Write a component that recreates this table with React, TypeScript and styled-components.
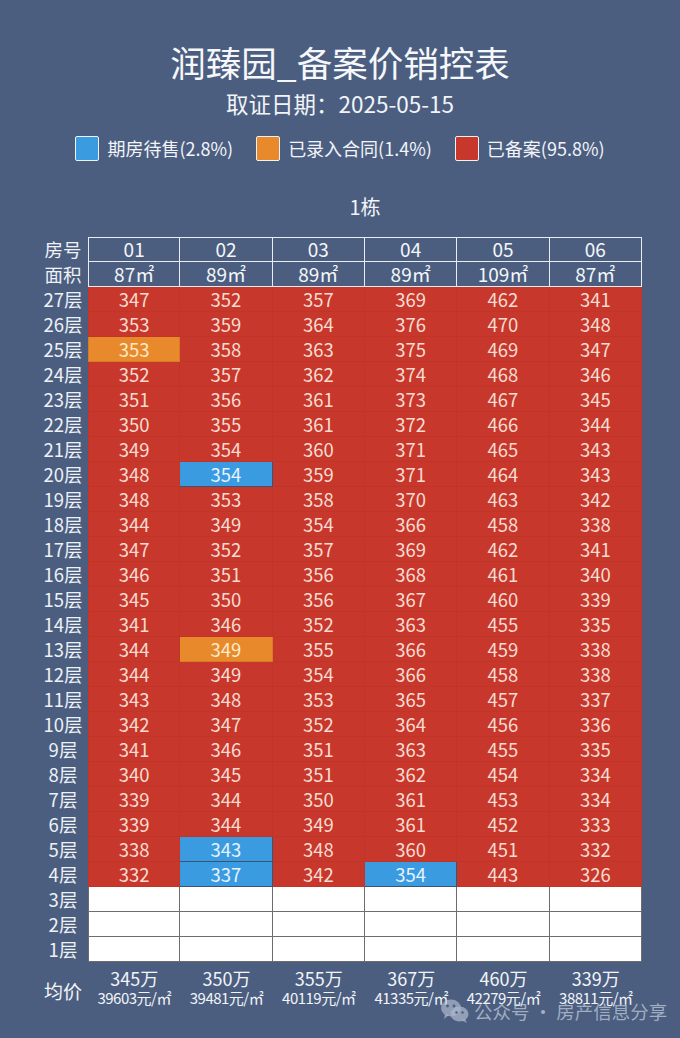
import React from "react";
import styled, { createGlobalStyle } from "styled-components";

const GlobalStyle = createGlobalStyle`
  html, body {
    margin: 0;
    padding: 0;
    background: #4b5e80;
  }
  body {
    font-family: "Noto Sans CJK SC", "Noto Sans", sans-serif;
    color: #f2f4f8;
  }
`;

type Status = "r" | "b" | "o" | "w";

const palette: Record<Status, { bg: string; fg: string; line: string }> = {
  r: { bg: "#c8372b", fg: "#f7dcd2", line: "#c13428" },
  b: { bg: "#3a9be0", fg: "#e6f3ff", line: "#3b5470" },
  o: { bg: "#e8892b", fg: "#fdebc9", line: "#d77c24" },
  w: { bg: "#ffffff", fg: "#333", line: "#6d6d6d" },
};

const units = [
  { no: "01", area: "87㎡", total: "345万", unit: "39603元/㎡" },
  { no: "02", area: "89㎡", total: "350万", unit: "39481元/㎡" },
  { no: "03", area: "89㎡", total: "355万", unit: "40119元/㎡" },
  { no: "04", area: "89㎡", total: "367万", unit: "41335元/㎡" },
  { no: "05", area: "109㎡", total: "460万", unit: "42279元/㎡" },
  { no: "06", area: "87㎡", total: "339万", unit: "38811元/㎡" },
];

// floor -> prices, "*" = 期房待售, "^" = 已录入合同
const rows: [number, string][] = [
  [27, "347 352 357 369 462 341"],
  [26, "353 359 364 376 470 348"],
  [25, "353^ 358 363 375 469 347"],
  [24, "352 357 362 374 468 346"],
  [23, "351 356 361 373 467 345"],
  [22, "350 355 361 372 466 344"],
  [21, "349 354 360 371 465 343"],
  [20, "348 354* 359 371 464 343"],
  [19, "348 353 358 370 463 342"],
  [18, "344 349 354 366 458 338"],
  [17, "347 352 357 369 462 341"],
  [16, "346 351 356 368 461 340"],
  [15, "345 350 356 367 460 339"],
  [14, "341 346 352 363 455 335"],
  [13, "344 349^ 355 366 459 338"],
  [12, "344 349 354 366 458 338"],
  [11, "343 348 353 365 457 337"],
  [10, "342 347 352 364 456 336"],
  [9, "341 346 351 363 455 335"],
  [8, "340 345 351 362 454 334"],
  [7, "339 344 350 361 453 334"],
  [6, "339 344 349 361 452 333"],
  [5, "338 343* 348 360 451 332"],
  [4, "332 337* 342 354* 443 326"],
  [3, ""],
  [2, ""],
  [1, ""],
];

const parse = (s: string): { v: string; st: Status }[] => {
  if (!s) return Array.from({ length: 6 }, () => ({ v: "", st: "w" as Status }));
  return s.split(" ").map((t) => {
    if (t.endsWith("*")) return { v: t.slice(0, -1), st: "b" as Status };
    if (t.endsWith("^")) return { v: t.slice(0, -1), st: "o" as Status };
    return { v: t, st: "r" as Status };
  });
};

const Page = styled.div`
  position: relative;
  width: 680px;
  height: 1038px;
  overflow: hidden;
  padding: 0 38px;
  box-sizing: border-box;
`;

const Title = styled.h1`
  margin: 0;
  padding-top: 38px;
  font-size: 35.5px;
  line-height: 48px;
  font-weight: 400;
  text-align: center;
  color: #f6f7fa;
`;

const Subtitle = styled.div`
  margin-top: 2px;
  font-size: 22.5px;
  line-height: 30px;
  text-align: center;
`;

const Legend = styled.div`
  display: flex;
  justify-content: center;
  gap: 23px;
  margin-top: 17px;
  height: 26px;
`;

const LegendItem = styled.div`
  display: flex;
  align-items: center;
  gap: 8px;
  font-size: 18px;
`;

const Swatch = styled.span<{ $st: Status }>`
  width: 24px;
  height: 25px;
  box-sizing: border-box;
  border: 1px solid #eef2f7;
  border-radius: 2px;
  background: ${(p) => palette[p.$st].bg};
`;

const Building = styled.div`
  margin: 30px 0 0 50px;
  font-size: 20px;
  line-height: 32px;
  text-align: center;
`;

const Table = styled.div`
  margin-top: 14px;
  display: flex;
  flex-direction: column;
`;

const Row = styled.div`
  display: grid;
  grid-template-columns: 50px repeat(6, 1fr);
  height: 25px;
`;

const Label = styled.div`
  font-size: 18.5px;
  line-height: 25px;
  text-align: center;
  color: #eef1f6;
`;

const HeadCell = styled.div<{ $top?: boolean; $first?: boolean }>`
  box-sizing: border-box;
  border-right: 1px solid #e9edf3;
  border-bottom: 1px solid #e9edf3;
  border-top: ${(p) => (p.$top ? "1px solid #e9edf3" : "none")};
  border-left: ${(p) => (p.$first ? "1px solid #e9edf3" : "none")};
  font-size: 19px;
  line-height: ${(p) => (p.$top ? "22px" : "23px")};
  text-align: center;
  color: #f4f6f9;
`;

const Cell = styled.div<{ $st: Status; $first?: boolean }>`
  box-sizing: border-box;
  background: ${(p) => palette[p.$st].bg};
  color: ${(p) => palette[p.$st].fg};
  border-right: 1px solid ${(p) => palette[p.$st].line};
  border-bottom: 1px solid ${(p) => palette[p.$st].line};
  border-left: ${(p) => (p.$first ? `1px solid ${palette[p.$st].line}` : "none")};
  font-size: 18.5px;
  line-height: 24px;
  text-align: center;
`;

const Footer = styled.div`
  display: grid;
  grid-template-columns: 50px repeat(6, 1fr);
  margin-top: 6px;
`;

const FootLabel = styled.div`
  font-size: 19px;
  line-height: 46px;
  text-align: center;
`;

const Avg = styled.div`
  display: flex;
  flex-direction: column;
  align-items: center;
`;

const AvgTotal = styled.span`
  font-size: 18px;
  line-height: 21px;
`;

const AvgUnit = styled.span`
  font-size: 15px;
  line-height: 17px;
  letter-spacing: -0.5px;
  white-space: nowrap;
`;

const Watermark = styled.div`
  position: absolute;
  left: 440px;
  top: 998px;
  display: flex;
  align-items: center;
  gap: 4px;
  font-size: 18.5px;
  color: rgba(196, 206, 222, 0.72);
  white-space: nowrap;
`;

const WeChat = () => (
  <svg width="30" height="26" viewBox="0 0 30 26">
    <ellipse cx="11" cy="10" rx="10" ry="8.5" fill="rgba(190,200,216,0.6)" />
    <path d="M5 16 L4 21 L9 17 Z" fill="rgba(190,200,216,0.6)" />
    <ellipse cx="19.5" cy="16" rx="9" ry="7.5" fill="rgba(170,182,202,0.75)" />
    <path d="M25 21 L27 25 L21 22 Z" fill="rgba(170,182,202,0.75)" />
    <circle cx="7.5" cy="8" r="1.4" fill="#4b5e80" />
    <circle cx="14" cy="8" r="1.4" fill="#4b5e80" />
    <circle cx="16.5" cy="14.5" r="1.2" fill="#4b5e80" />
    <circle cx="22.5" cy="14.5" r="1.2" fill="#4b5e80" />
  </svg>
);

export default function App() {
  return (
    <>
      <GlobalStyle />
      <Page>
        <Title>润臻园_备案价销控表</Title>
        <Subtitle>取证日期：2025-05-15</Subtitle>
        <Legend>
          <LegendItem>
            <Swatch $st="b" />
            期房待售(2.8%)
          </LegendItem>
          <LegendItem>
            <Swatch $st="o" />
            已录入合同(1.4%)
          </LegendItem>
          <LegendItem>
            <Swatch $st="r" />
            已备案(95.8%)
          </LegendItem>
        </Legend>
        <Building>1栋</Building>
        <Table>
          <Row>
            <Label>房号</Label>
            {units.map((u, i) => (
              <HeadCell key={u.no} $top $first={i === 0}>
                {u.no}
              </HeadCell>
            ))}
          </Row>
          <Row>
            <Label>面积</Label>
            {units.map((u, i) => (
              <HeadCell key={u.no} $first={i === 0}>
                {u.area}
              </HeadCell>
            ))}
          </Row>
          {rows.map(([floor, data]) => (
            <Row key={floor}>
              <Label>{floor}层</Label>
              {parse(data).map((c, i) => (
                <Cell key={i} $st={c.st} $first={i === 0}>
                  {c.v}
                </Cell>
              ))}
            </Row>
          ))}
        </Table>
        <Footer>
          <FootLabel>均价</FootLabel>
          {units.map((u) => (
            <Avg key={u.no}>
              <AvgTotal>{u.total}</AvgTotal>
              <AvgUnit>{u.unit}</AvgUnit>
            </Avg>
          ))}
        </Footer>
        <Watermark>
          <WeChat />
          公众号 · 房产信息分享
        </Watermark>
      </Page>
    </>
  );
}
